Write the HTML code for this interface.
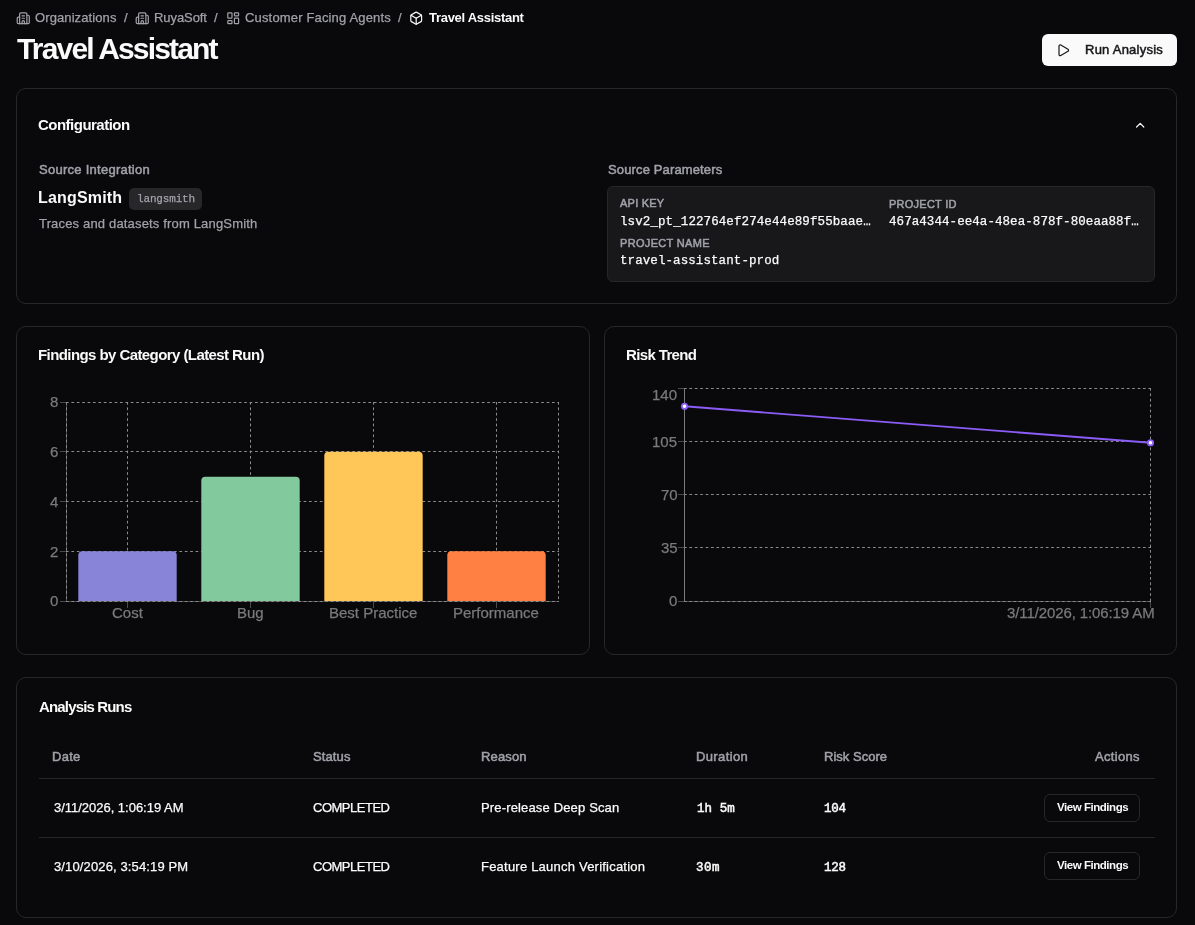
<!DOCTYPE html>
<html><head><meta charset="utf-8"><style>
html,body{margin:0;padding:0;background:#09090b;width:1195px;height:925px;overflow:hidden;position:relative}
.t{position:absolute;white-space:nowrap;line-height:1;-webkit-font-smoothing:antialiased;will-change:transform}
.r{-webkit-text-stroke:0.25px currentColor}
.m5{-webkit-text-stroke:0.5px currentColor}
.ic{position:absolute;overflow:visible}
.card{position:absolute;box-sizing:border-box;border:1px solid #27272a;border-radius:10px;background:#09090b}
.hl{position:absolute;height:1px;background:#27272a}
</style></head><body>
<div class=card style="left:16px;top:88px;width:1161px;height:216px"></div>
<div class=card style="left:16px;top:326px;width:574px;height:329px"></div>
<div class=card style="left:604px;top:326px;width:573px;height:329px"></div>
<div class=card style="left:16px;top:677px;width:1161px;height:241px"></div>
<div style="position:absolute;left:1042px;top:34px;width:135px;height:32px;background:#fafafa;border-radius:6px"></div>
<div style="position:absolute;box-sizing:border-box;left:607px;top:186px;width:548px;height:96px;background:#18181b;border:1px solid #27272a;border-radius:6px"></div>
<div style="position:absolute;left:129px;top:188px;width:73px;height:22px;background:#27272a;border-radius:5px"></div>
<div class=hl style="left:39px;top:778px;width:1116px"></div>
<div class=hl style="left:39px;top:837px;width:1116px"></div>
<div style="position:absolute;box-sizing:border-box;left:1044px;top:794px;width:96px;height:28px;border:1px solid #27272a;border-radius:6px"></div>
<div style="position:absolute;box-sizing:border-box;left:1044px;top:852px;width:96px;height:28px;border:1px solid #27272a;border-radius:6px"></div>
<svg style="position:absolute;left:0;top:0" width="1195" height="925"><line x1="66.5" y1="402" x2="66.5" y2="601.5" stroke="#4a4a4a" stroke-width="1"/><line x1="66" y1="601.5" x2="558.5" y2="601.5" stroke="#4a4a4a" stroke-width="1"/><line x1="66" y1="402.5" x2="559" y2="402.5" stroke="#8c8c8c" stroke-width="1" stroke-dasharray="2.7 2.7"/><line x1="66" y1="451.5" x2="559" y2="451.5" stroke="#8c8c8c" stroke-width="1" stroke-dasharray="2.7 2.7"/><line x1="66" y1="501.5" x2="559" y2="501.5" stroke="#8c8c8c" stroke-width="1" stroke-dasharray="2.7 2.7"/><line x1="66" y1="551.5" x2="559" y2="551.5" stroke="#8c8c8c" stroke-width="1" stroke-dasharray="2.7 2.7"/><line x1="66" y1="601.5" x2="559" y2="601.5" stroke="#8c8c8c" stroke-width="1" stroke-dasharray="2.7 2.7"/><line x1="66.5" y1="402" x2="66.5" y2="602" stroke="#8c8c8c" stroke-width="1" stroke-dasharray="2.7 2.7"/><line x1="127.5" y1="402" x2="127.5" y2="602" stroke="#8c8c8c" stroke-width="1" stroke-dasharray="2.7 2.7"/><line x1="250.5" y1="402" x2="250.5" y2="602" stroke="#8c8c8c" stroke-width="1" stroke-dasharray="2.7 2.7"/><line x1="373.5" y1="402" x2="373.5" y2="602" stroke="#8c8c8c" stroke-width="1" stroke-dasharray="2.7 2.7"/><line x1="496.5" y1="402" x2="496.5" y2="602" stroke="#8c8c8c" stroke-width="1" stroke-dasharray="2.7 2.7"/><line x1="558.5" y1="402" x2="558.5" y2="602" stroke="#8c8c8c" stroke-width="1" stroke-dasharray="2.7 2.7"/><line x1="60" y1="402.5" x2="66" y2="402.5" stroke="#4a4a4a" stroke-width="1"/><line x1="60" y1="451.5" x2="66" y2="451.5" stroke="#4a4a4a" stroke-width="1"/><line x1="60" y1="501.5" x2="66" y2="501.5" stroke="#4a4a4a" stroke-width="1"/><line x1="60" y1="551.5" x2="66" y2="551.5" stroke="#4a4a4a" stroke-width="1"/><line x1="60" y1="601.5" x2="66" y2="601.5" stroke="#4a4a4a" stroke-width="1"/><line x1="127.5" y1="602" x2="127.5" y2="608" stroke="#4a4a4a" stroke-width="1"/><line x1="250.5" y1="602" x2="250.5" y2="608" stroke="#4a4a4a" stroke-width="1"/><line x1="373.5" y1="602" x2="373.5" y2="608" stroke="#4a4a4a" stroke-width="1"/><line x1="496.5" y1="602" x2="496.5" y2="608" stroke="#4a4a4a" stroke-width="1"/><path d="M78.3,601 L78.3,555.25 Q78.3,551.25 82.3,551.25 L172.7,551.25 Q176.7,551.25 176.7,555.25 L176.7,601 Z" fill="#8884d8"/><path d="M201.3,601 L201.3,480.625 Q201.3,476.625 205.3,476.625 L295.70000000000005,476.625 Q299.70000000000005,476.625 299.70000000000005,480.625 L299.70000000000005,601 Z" fill="#82ca9d"/><path d="M324.3,601 L324.3,455.75 Q324.3,451.75 328.3,451.75 L418.70000000000005,451.75 Q422.70000000000005,451.75 422.70000000000005,455.75 L422.70000000000005,601 Z" fill="#ffc658"/><path d="M447.3,601 L447.3,555.25 Q447.3,551.25 451.3,551.25 L541.7,551.25 Q545.7,551.25 545.7,555.25 L545.7,601 Z" fill="#ff8042"/><line x1="684" y1="601.5" x2="1151" y2="601.5" stroke="#4a4a4a" stroke-width="1"/><line x1="684" y1="388.5" x2="1151" y2="388.5" stroke="#8c8c8c" stroke-width="1" stroke-dasharray="2.7 2.7"/><line x1="684" y1="441.5" x2="1151" y2="441.5" stroke="#8c8c8c" stroke-width="1" stroke-dasharray="2.7 2.7"/><line x1="684" y1="494.5" x2="1151" y2="494.5" stroke="#8c8c8c" stroke-width="1" stroke-dasharray="2.7 2.7"/><line x1="684" y1="547.5" x2="1151" y2="547.5" stroke="#8c8c8c" stroke-width="1" stroke-dasharray="2.7 2.7"/><line x1="684" y1="601.5" x2="1151" y2="601.5" stroke="#8c8c8c" stroke-width="1" stroke-dasharray="2.7 2.7"/><line x1="1150.5" y1="388" x2="1150.5" y2="602" stroke="#8c8c8c" stroke-width="1" stroke-dasharray="2.7 2.7"/><line x1="684.5" y1="388" x2="684.5" y2="601.5" stroke="#7a7a7a" stroke-width="1"/><line x1="678" y1="388.5" x2="684" y2="388.5" stroke="#4a4a4a" stroke-width="1"/><line x1="678" y1="441.5" x2="684" y2="441.5" stroke="#4a4a4a" stroke-width="1"/><line x1="678" y1="494.5" x2="684" y2="494.5" stroke="#4a4a4a" stroke-width="1"/><line x1="678" y1="547.5" x2="684" y2="547.5" stroke="#4a4a4a" stroke-width="1"/><line x1="678" y1="601.5" x2="684" y2="601.5" stroke="#4a4a4a" stroke-width="1"/><line x1="1150.5" y1="602" x2="1150.5" y2="608" stroke="#4a4a4a" stroke-width="1"/><line x1="684.5" y1="406.25714285714287" x2="1150.5" y2="442.7714285714286" stroke="#8b5cf6" stroke-width="1.8"/><circle cx="684.5" cy="406.25714285714287" r="2.7" fill="#fff" stroke="#8b5cf6" stroke-width="1.8"/><circle cx="1150.5" cy="442.7714285714286" r="2.7" fill="#fff" stroke="#8b5cf6" stroke-width="1.8"/></svg>
<svg class=ic style="left:15.6px;top:10.7px" width="14.5" height="14.5" viewBox="0 0 24 24" fill="none" stroke="#a1a1aa" stroke-width="2" stroke-linecap="round" stroke-linejoin="round"><path d="M10 12h4"/><path d="M10 8h4"/><path d="M14 21v-3a2 2 0 0 0-4 0v3"/><path d="M6 10H4a2 2 0 0 0-2 2v7a2 2 0 0 0 2 2h16a2 2 0 0 0 2-2V9a2 2 0 0 0-2-2h-2"/><path d="M6 21V5a2 2 0 0 1 2-2h8a2 2 0 0 1 2 2v16"/></svg><svg class=ic style="left:134.6px;top:10.7px" width="14.5" height="14.5" viewBox="0 0 24 24" fill="none" stroke="#a1a1aa" stroke-width="2" stroke-linecap="round" stroke-linejoin="round"><path d="M10 12h4"/><path d="M10 8h4"/><path d="M14 21v-3a2 2 0 0 0-4 0v3"/><path d="M6 10H4a2 2 0 0 0-2 2v7a2 2 0 0 0 2 2h16a2 2 0 0 0 2-2V9a2 2 0 0 0-2-2h-2"/><path d="M6 21V5a2 2 0 0 1 2-2h8a2 2 0 0 1 2 2v16"/></svg><svg class=ic style="left:225.8px;top:10.8px" width="14.4" height="14.4" viewBox="0 0 24 24" fill="none" stroke="#a1a1aa" stroke-width="2" stroke-linecap="round" stroke-linejoin="round"><rect width="7" height="9" x="3" y="3" rx="1"/><rect width="7" height="5" x="14" y="3" rx="1"/><rect width="7" height="9" x="14" y="12" rx="1"/><rect width="7" height="5" x="3" y="16" rx="1"/></svg><svg class=ic style="left:408.5px;top:11.2px" width="14.4" height="14.4" viewBox="0 0 24 24" fill="none" stroke="#fafafa" stroke-width="2" stroke-linecap="round" stroke-linejoin="round"><path d="M21 8a2 2 0 0 0-1-1.73l-7-4a2 2 0 0 0-2 0l-7 4A2 2 0 0 0 3 8v8a2 2 0 0 0 1 1.73l7 4a2 2 0 0 0 2 0l7-4A2 2 0 0 0 21 16Z"/><path d="m3.3 7 8.7 5 8.7-5"/><path d="M12 22V12"/></svg><svg class=ic style="left:1055.7px;top:42.8px" width="14.4" height="14.4" viewBox="0 0 24 24" fill="none" stroke="#18181b" stroke-width="2" stroke-linecap="round" stroke-linejoin="round"><path d="M5 5a2 2 0 0 1 3.008-1.728l11.997 6.998a2 2 0 0 1 .003 3.458l-12 7A2 2 0 0 1 5 19z"/></svg><svg class=ic style="left:1133px;top:118.1px" width="14.4" height="14.4" viewBox="0 0 24 24" fill="none" stroke="#fafafa" stroke-width="2" stroke-linecap="round" stroke-linejoin="round"><path d="m18 15-6-6-6 6"/></svg>
<div class='t r' style="left:34.80px;top:10.65px;font:400 13px/1 'Liberation Sans', sans-serif;letter-spacing:0.1px;color:#a1a1aa">Organizations</div>
<div class='t r' style="left:124.00px;top:10.65px;font:400 13px/1 'Liberation Sans', sans-serif;letter-spacing:0.0px;color:#a1a1aa">/</div>
<div class='t r' style="left:153.50px;top:10.65px;font:400 13px/1 'Liberation Sans', sans-serif;letter-spacing:-0.071px;color:#a1a1aa">RuyaSoft</div>
<div class='t r' style="left:214.30px;top:10.65px;font:400 13px/1 'Liberation Sans', sans-serif;letter-spacing:0.0px;color:#a1a1aa">/</div>
<div class='t r' style="left:244.60px;top:10.65px;font:400 13px/1 'Liberation Sans', sans-serif;letter-spacing:0.162px;color:#a1a1aa">Customer Facing Agents</div>
<div class='t r' style="left:398.00px;top:10.65px;font:400 13px/1 'Liberation Sans', sans-serif;letter-spacing:0.0px;color:#a1a1aa">/</div>
<div class='t' style="left:428.50px;top:10.65px;font:700 13px/1 'Liberation Sans', sans-serif;letter-spacing:-0.287px;color:#fafafa">Travel Assistant</div>
<div class='t' style="left:17.00px;top:33.60px;font:700 30px/1 'Liberation Sans', sans-serif;letter-spacing:-1.827px;color:#fafafa">Travel Assistant</div>
<div class='t m5' style="left:1084.60px;top:42.85px;font:400 13px/1 'Liberation Sans', sans-serif;letter-spacing:0.245px;color:#18181b">Run Analysis</div>
<div class='t' style="left:38.20px;top:117.05px;font:700 15px/1 'Liberation Sans', sans-serif;letter-spacing:-0.517px;color:#fafafa">Configuration</div>
<div class='t m5' style="left:39.00px;top:163.05px;font:400 13px/1 'Liberation Sans', sans-serif;letter-spacing:0.265px;color:#a1a1aa">Source Integration</div>
<div class='t' style="left:38.00px;top:190.20px;font:700 16px/1 'Liberation Sans', sans-serif;letter-spacing:0.175px;color:#fafafa">LangSmith</div>
<div class='t r' style="left:137.00px;top:194.04px;font:400 11px/1 'Liberation Mono';letter-spacing:-0.163px;color:#a1a1aa">langsmith</div>
<div class='t r' style="left:39.00px;top:216.65px;font:400 13px/1 'Liberation Sans', sans-serif;letter-spacing:0.167px;color:#a1a1aa">Traces and datasets from LangSmith</div>
<div class='t m5' style="left:607.80px;top:162.75px;font:400 13px/1 'Liberation Sans', sans-serif;letter-spacing:0.138px;color:#a1a1aa">Source Parameters</div>
<div class='t m5' style="left:619.60px;top:198.35px;font:400 11px/1 'Liberation Sans', sans-serif;letter-spacing:0.233px;color:#a1a1aa">API KEY</div>
<div class='t r' style="left:619.50px;top:215.50px;font:400 12.5px/1 'Liberation Mono';letter-spacing:0.097px;color:#fafafa">lsv2_pt_122764ef274e44e89f55baae…</div>
<div class='t m5' style="left:888.80px;top:198.65px;font:400 11px/1 'Liberation Sans', sans-serif;letter-spacing:0.244px;color:#a1a1aa">PROJECT ID</div>
<div class='t r' style="left:888.80px;top:215.60px;font:400 12.5px/1 'Liberation Mono';letter-spacing:0.069px;color:#fafafa">467a4344-ee4a-48ea-878f-80eaa88f…</div>
<div class='t m5' style="left:620.00px;top:237.65px;font:400 11px/1 'Liberation Sans', sans-serif;letter-spacing:0.327px;color:#a1a1aa">PROJECT NAME</div>
<div class='t r' style="left:619.50px;top:255.30px;font:400 12.5px/1 'Liberation Mono';letter-spacing:0.085px;color:#fafafa">travel-assistant-prod</div>
<div class='t' style="left:37.80px;top:346.85px;font:700 15px/1 'Liberation Sans', sans-serif;letter-spacing:-0.578px;color:#fafafa">Findings by Category (Latest Run)</div>
<div class='t' style="left:625.90px;top:347.45px;font:700 15px/1 'Liberation Sans', sans-serif;letter-spacing:-0.633px;color:#fafafa">Risk Trend</div>
<div class='t r' style="left:50.00px;top:394.45px;font:400 15px/1 'Liberation Sans', sans-serif;letter-spacing:0.0px;color:#7a7a7a">8</div>
<div class='t r' style="left:50.00px;top:444.20px;font:400 15px/1 'Liberation Sans', sans-serif;letter-spacing:0.0px;color:#7a7a7a">6</div>
<div class='t r' style="left:50.00px;top:493.95px;font:400 15px/1 'Liberation Sans', sans-serif;letter-spacing:0.0px;color:#7a7a7a">4</div>
<div class='t r' style="left:50.00px;top:543.70px;font:400 15px/1 'Liberation Sans', sans-serif;letter-spacing:0.0px;color:#7a7a7a">2</div>
<div class='t r' style="left:50.00px;top:593.45px;font:400 15px/1 'Liberation Sans', sans-serif;letter-spacing:0.0px;color:#7a7a7a">0</div>
<div class='t r' style="left:111.70px;top:604.95px;font:400 15px/1 'Liberation Sans', sans-serif;letter-spacing:0.0px;color:#7a7a7a">Cost</div>
<div class='t r' style="left:237.20px;top:604.95px;font:400 15px/1 'Liberation Sans', sans-serif;letter-spacing:0.0px;color:#7a7a7a">Bug</div>
<div class='t r' style="left:329.35px;top:604.95px;font:400 15px/1 'Liberation Sans', sans-serif;letter-spacing:0.0px;color:#7a7a7a">Best Practice</div>
<div class='t r' style="left:453.35px;top:604.95px;font:400 15px/1 'Liberation Sans', sans-serif;letter-spacing:0.0px;color:#7a7a7a">Performance</div>
<div class='t r' style="left:652.00px;top:387.45px;font:400 15px/1 'Liberation Sans', sans-serif;letter-spacing:0.0px;color:#7a7a7a">140</div>
<div class='t r' style="left:652.00px;top:433.70px;font:400 15px/1 'Liberation Sans', sans-serif;letter-spacing:0.0px;color:#7a7a7a">105</div>
<div class='t r' style="left:661.00px;top:486.95px;font:400 15px/1 'Liberation Sans', sans-serif;letter-spacing:0.0px;color:#7a7a7a">70</div>
<div class='t r' style="left:661.00px;top:540.20px;font:400 15px/1 'Liberation Sans', sans-serif;letter-spacing:0.0px;color:#7a7a7a">35</div>
<div class='t r' style="left:669.00px;top:593.45px;font:400 15px/1 'Liberation Sans', sans-serif;letter-spacing:0.0px;color:#7a7a7a">0</div>
<div class='t r' style="left:1006.60px;top:604.75px;font:400 15px/1 'Liberation Sans', sans-serif;letter-spacing:-0.11px;color:#7a7a7a">3/11/2026, 1:06:19 AM</div>
<div class='t' style="left:39.20px;top:699.05px;font:700 15px/1 'Liberation Sans', sans-serif;letter-spacing:-0.842px;color:#fafafa">Analysis Runs</div>
<div class='t m5' style="left:52.40px;top:750.05px;font:400 13px/1 'Liberation Sans', sans-serif;letter-spacing:0.267px;color:#a1a1aa">Date</div>
<div class='t m5' style="left:312.70px;top:750.05px;font:400 13px/1 'Liberation Sans', sans-serif;letter-spacing:0.12px;color:#a1a1aa">Status</div>
<div class='t m5' style="left:481.30px;top:750.05px;font:400 13px/1 'Liberation Sans', sans-serif;letter-spacing:0.14px;color:#a1a1aa">Reason</div>
<div class='t m5' style="left:695.90px;top:750.05px;font:400 13px/1 'Liberation Sans', sans-serif;letter-spacing:0.371px;color:#a1a1aa">Duration</div>
<div class='t m5' style="left:823.60px;top:750.05px;font:400 13px/1 'Liberation Sans', sans-serif;letter-spacing:0.022px;color:#a1a1aa">Risk Score</div>
<div class='t m5' style="left:1094.90px;top:750.05px;font:400 13px/1 'Liberation Sans', sans-serif;letter-spacing:0.317px;color:#a1a1aa">Actions</div>
<div class='t r' style="left:53.70px;top:800.75px;font:400 13px/1 'Liberation Sans', sans-serif;letter-spacing:-0.02px;color:#fafafa">3/11/2026, 1:06:19 AM</div>
<div class='t r' style="left:312.70px;top:800.75px;font:400 13px/1 'Liberation Sans', sans-serif;letter-spacing:-0.487px;color:#fafafa">COMPLETED</div>
<div class='t r' style="left:481.30px;top:800.75px;font:400 13px/1 'Liberation Sans', sans-serif;letter-spacing:0.155px;color:#fafafa">Pre-release Deep Scan</div>
<div class='t m5' style="left:697.10px;top:802.60px;font:400 12.5px/1 'Liberation Mono';letter-spacing:0.075px;color:#fafafa">1h 5m</div>
<div class='t m5' style="left:824.40px;top:802.60px;font:400 12.5px/1 'Liberation Mono';letter-spacing:-0.2px;color:#fafafa">104</div>
<div class='t' style="left:1056.60px;top:802.23px;font:700 11.5px/1 'Liberation Sans', sans-serif;letter-spacing:-0.458px;color:#fafafa">View Findings</div>
<div class='t r' style="left:53.70px;top:860.15px;font:400 13px/1 'Liberation Sans', sans-serif;letter-spacing:0.13px;color:#fafafa">3/10/2026, 3:54:19 PM</div>
<div class='t r' style="left:312.70px;top:860.15px;font:400 13px/1 'Liberation Sans', sans-serif;letter-spacing:-0.487px;color:#fafafa">COMPLETED</div>
<div class='t r' style="left:481.30px;top:860.15px;font:400 13px/1 'Liberation Sans', sans-serif;letter-spacing:0.219px;color:#fafafa">Feature Launch Verification</div>
<div class='t m5' style="left:696.10px;top:862.00px;font:400 12.5px/1 'Liberation Mono';letter-spacing:0.45px;color:#fafafa">30m</div>
<div class='t m5' style="left:824.40px;top:862.00px;font:400 12.5px/1 'Liberation Mono';letter-spacing:-0.2px;color:#fafafa">128</div>
<div class='t' style="left:1056.60px;top:859.62px;font:700 11.5px/1 'Liberation Sans', sans-serif;letter-spacing:-0.458px;color:#fafafa">View Findings</div>
</body></html>
